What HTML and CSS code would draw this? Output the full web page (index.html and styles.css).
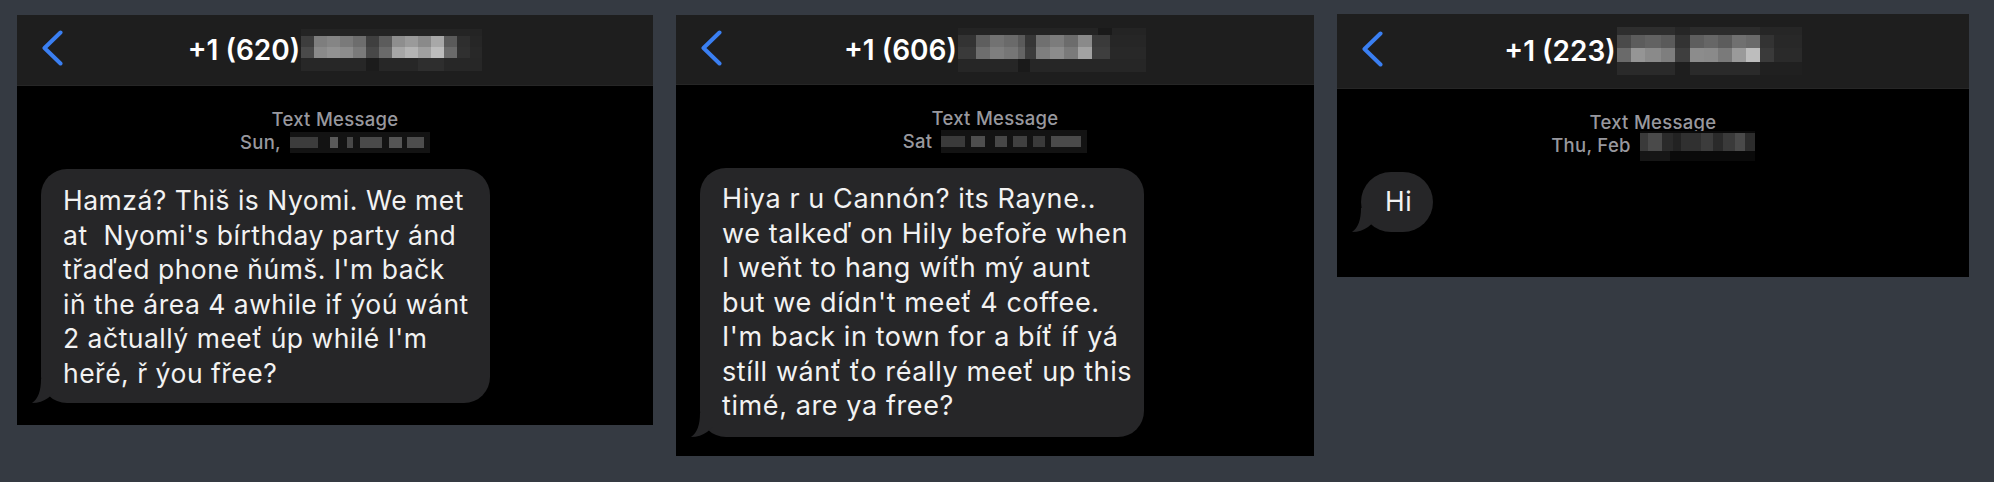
FILE: index.html
```html
<!DOCTYPE html>
<html lang="en">
<head>
<meta charset="utf-8">
<title>Messages</title>
<link rel="stylesheet" href="styles.css">
</head>
<body>
<main class="board">
  <section class="phone phone--one">
    <header class="nav">
      <svg class="back" viewBox="0 0 21 36" aria-hidden="true"><path d="M18.5 2.5 L2.5 18 L18.5 33.5"/></svg>
      <div class="title">
        <span class="num">+1 (620)</span>
        <svg class="mosaic" width="181" height="42" viewBox="0 0 181 42" aria-hidden="true">
          <rect x="0" y="0" width="181" height="7" fill="#242424"/>
          <rect x="0" y="7" width="13" height="11" fill="#3d3d3d"/><rect x="13" y="7" width="13" height="11" fill="#7e7e7e"/><rect x="26" y="7" width="13" height="11" fill="#858585"/><rect x="39" y="7" width="13" height="11" fill="#7a7a7a"/><rect x="52" y="7" width="13" height="11" fill="#6d6d6d"/><rect x="65" y="7" width="13" height="11" fill="#3f3f3f"/><rect x="78" y="7" width="13" height="11" fill="#5c5c5c"/><rect x="91" y="7" width="13" height="11" fill="#8e8e8e"/><rect x="104" y="7" width="13" height="11" fill="#9a9a9a"/><rect x="117" y="7" width="13" height="11" fill="#8a8a8a"/><rect x="130" y="7" width="13" height="11" fill="#a8a8a8"/><rect x="143" y="7" width="13" height="11" fill="#5a5a5a"/><rect x="156" y="7" width="13" height="11" fill="#2e2e2e"/><rect x="169" y="7" width="12" height="11" fill="#262626"/>
          <rect x="0" y="18" width="13" height="11" fill="#4a4a4a"/><rect x="13" y="18" width="13" height="11" fill="#8a8a8a"/><rect x="26" y="18" width="13" height="11" fill="#929292"/><rect x="39" y="18" width="13" height="11" fill="#8c8c8c"/><rect x="52" y="18" width="13" height="11" fill="#7a7a7a"/><rect x="65" y="18" width="13" height="11" fill="#484848"/><rect x="78" y="18" width="13" height="11" fill="#6a6a6a"/><rect x="91" y="18" width="13" height="11" fill="#a6a6a6"/><rect x="104" y="18" width="13" height="11" fill="#b4b4b4"/><rect x="117" y="18" width="13" height="11" fill="#a0a0a0"/><rect x="130" y="18" width="13" height="11" fill="#bcbcbc"/><rect x="143" y="18" width="13" height="11" fill="#6a6a6a"/><rect x="156" y="18" width="13" height="11" fill="#303030"/><rect x="169" y="18" width="12" height="11" fill="#282828"/>
          <rect x="0" y="29" width="181" height="13" fill="#272727"/><rect x="65" y="29" width="13" height="13" fill="#1c1c1c"/><rect x="117" y="29" width="26" height="13" fill="#2e2e2e"/>
        </svg>
      </div>
      <span class="nav-spacer"></span>
    </header>
    <div class="thread">
      <div class="meta">
        <div>Text Message</div>
        <div class="meta-date">Sun,
          <svg class="mosaic-sm" width="140" height="21" viewBox="0 0 140 21" aria-hidden="true">
            <rect x="0" y="0" width="140" height="21" fill="#131313"/>
            <rect x="0" y="5" width="28" height="11" fill="#3c3c3c"/><rect x="40" y="5" width="8" height="11" fill="#5a5a5a"/><rect x="57" y="5" width="6" height="11" fill="#484848"/><rect x="70" y="5" width="22" height="11" fill="#4a4a4a"/><rect x="99" y="5" width="13" height="11" fill="#555555"/><rect x="117" y="5" width="17" height="11" fill="#4d4d4d"/>
          </svg>
        </div>
      </div>
      <div class="bubble bubble--one">Hamzá? Thiš is Nyomi. We met<br>at&nbsp; Nyomi's bírthday party ánd<br>třaďed phone ňúmš. I'm bačk<br>iň the área 4 awhile if ýoú wánt<br>2 ačtuallý meeť úp whilé I'm<br>heřé, ř ýou fřee?<svg class="tail" viewBox="0 0 24 24" aria-hidden="true"><path d="M9 0 C9 12 6 20 0 24 C6 24 12 22 16 19 L22 14 L22 0 Z"/></svg></div>
    </div>
  </section>

  <section class="phone phone--two">
    <header class="nav">
      <svg class="back" viewBox="0 0 21 36" aria-hidden="true"><path d="M18.5 2.5 L2.5 18 L18.5 33.5"/></svg>
      <div class="title">
        <span class="num">+1 (606)</span>
        <svg class="mosaic" width="188" height="44" viewBox="0 0 188 44" aria-hidden="true">
          <rect x="0" y="0" width="188" height="7" fill="#242424"/><rect x="140" y="0" width="14" height="7" fill="#1a1a1a"/>
          <rect x="0" y="7" width="18" height="12" fill="#333333"/><rect x="18" y="7" width="14" height="12" fill="#5e5e5e"/><rect x="32" y="7" width="14" height="12" fill="#727272"/><rect x="46" y="7" width="14" height="12" fill="#6a6a6a"/><rect x="60" y="7" width="7" height="12" fill="#5a5a5a"/><rect x="67" y="7" width="11" height="12" fill="#363636"/><rect x="78" y="7" width="14" height="12" fill="#707070"/><rect x="92" y="7" width="14" height="12" fill="#7c7c7c"/><rect x="106" y="7" width="14" height="12" fill="#6c6c6c"/><rect x="120" y="7" width="14" height="12" fill="#8a8a8a"/><rect x="134" y="7" width="18" height="12" fill="#3a3a3a"/><rect x="152" y="7" width="36" height="12" fill="#262626"/>
          <rect x="0" y="19" width="18" height="12" fill="#3a3a3a"/><rect x="18" y="19" width="14" height="12" fill="#6e6e6e"/><rect x="32" y="19" width="14" height="12" fill="#7e7e7e"/><rect x="46" y="19" width="14" height="12" fill="#767676"/><rect x="60" y="19" width="7" height="12" fill="#646464"/><rect x="67" y="19" width="11" height="12" fill="#3c3c3c"/><rect x="78" y="19" width="14" height="12" fill="#7e7e7e"/><rect x="92" y="19" width="14" height="12" fill="#8c8c8c"/><rect x="106" y="19" width="14" height="12" fill="#7a7a7a"/><rect x="120" y="19" width="14" height="12" fill="#a2a2a2"/><rect x="134" y="19" width="18" height="12" fill="#3e3e3e"/><rect x="152" y="19" width="36" height="12" fill="#282828"/>
          <rect x="0" y="31" width="188" height="13" fill="#262626"/><rect x="60" y="31" width="12" height="13" fill="#1a1a1a"/>
        </svg>
      </div>
      <span class="nav-spacer"></span>
    </header>
    <div class="thread">
      <div class="meta">
        <div>Text Message</div>
        <div class="meta-date">Sat
          <svg class="mosaic-sm" width="146" height="23" viewBox="0 0 146 23" aria-hidden="true">
            <rect x="0" y="0" width="146" height="23" fill="#131313"/>
            <rect x="0" y="6" width="24" height="11" fill="#3a3a3a"/><rect x="30" y="6" width="14" height="11" fill="#4e4e4e"/><rect x="54" y="6" width="12" height="11" fill="#474747"/><rect x="72" y="6" width="14" height="11" fill="#404040"/><rect x="92" y="6" width="12" height="11" fill="#3a3a3a"/><rect x="110" y="6" width="30" height="11" fill="#4a4a4a"/>
          </svg>
        </div>
      </div>
      <div class="bubble bubble--two">Hiya r u Cannón? its Rayne..<br>we talkeď on Hily befoře when<br>I weňt to hang wíťh mý aunt<br>but we dídn't meeť 4 coffee.<br>I'm back in town for a bíť íf yá<br>stíll wánť ťo réally meeť up this<br>timé, are ya free?<svg class="tail" viewBox="0 0 24 24" aria-hidden="true"><path d="M9 0 C9 12 6 20 0 24 C6 24 12 22 16 19 L22 14 L22 0 Z"/></svg></div>
    </div>
  </section>

  <section class="phone phone--three">
    <header class="nav">
      <svg class="back" viewBox="0 0 21 36" aria-hidden="true"><path d="M18.5 2.5 L2.5 18 L18.5 33.5"/></svg>
      <div class="title">
        <span class="num">+1 (223)</span>
        <svg class="mosaic" width="185" height="48" viewBox="0 0 185 48" aria-hidden="true">
          <rect x="0" y="0" width="185" height="8" fill="#262626"/><rect x="0" y="0" width="58" height="8" fill="#2e2e2e"/><rect x="73" y="0" width="70" height="8" fill="#2c2c2c"/>
          <rect x="0" y="8" width="14" height="13" fill="#4a4a4a"/><rect x="14" y="8" width="14" height="13" fill="#5c5c5c"/><rect x="28" y="8" width="16" height="13" fill="#626262"/><rect x="44" y="8" width="14" height="13" fill="#5a5a5a"/><rect x="58" y="8" width="15" height="13" fill="#333333"/><rect x="73" y="8" width="14" height="13" fill="#5e5e5e"/><rect x="87" y="8" width="14" height="13" fill="#666666"/><rect x="101" y="8" width="14" height="13" fill="#5c5c5c"/><rect x="115" y="8" width="14" height="13" fill="#707070"/><rect x="129" y="8" width="14" height="13" fill="#6a6a6a"/><rect x="143" y="8" width="14" height="13" fill="#333333"/><rect x="157" y="8" width="28" height="13" fill="#282828"/>
          <rect x="0" y="21" width="14" height="14" fill="#6a6a6a"/><rect x="14" y="21" width="14" height="14" fill="#959595"/><rect x="28" y="21" width="16" height="14" fill="#8a8a8a"/><rect x="44" y="21" width="14" height="14" fill="#7e7e7e"/><rect x="58" y="21" width="15" height="14" fill="#3e3e3e"/><rect x="73" y="21" width="14" height="14" fill="#8c8c8c"/><rect x="87" y="21" width="14" height="14" fill="#8a8a8a"/><rect x="101" y="21" width="14" height="14" fill="#7a7a7a"/><rect x="115" y="21" width="14" height="14" fill="#9a9a9a"/><rect x="129" y="21" width="14" height="14" fill="#bdbdbd"/><rect x="143" y="21" width="14" height="14" fill="#3a3a3a"/><rect x="157" y="21" width="28" height="14" fill="#2a2a2a"/>
          <rect x="0" y="35" width="185" height="13" fill="#2a2a2a"/><rect x="58" y="35" width="15" height="13" fill="#1e1e1e"/><rect x="143" y="35" width="42" height="13" fill="#202020"/>
        </svg>
      </div>
      <span class="nav-spacer"></span>
    </header>
    <div class="thread">
      <div class="meta">
        <div>Text Message</div>
        <div class="meta-date">Thu, Feb
          <svg class="mosaic-sm" width="115" height="30" viewBox="0 0 115 30" aria-hidden="true">
            <rect x="0" y="0" width="115" height="30" fill="#0a0a0a"/>
            <rect x="0" y="2" width="8" height="18" fill="#3a3a3a"/><rect x="8" y="2" width="14" height="18" fill="#4a4a4a"/><rect x="22" y="2" width="11" height="18" fill="#2a2a2a"/><rect x="33" y="2" width="8" height="18" fill="#222222"/><rect x="41" y="2" width="20" height="18" fill="#303030"/><rect x="61" y="2" width="12" height="18" fill="#3c3c3c"/><rect x="73" y="2" width="10" height="18" fill="#2a2a2a"/><rect x="83" y="2" width="12" height="18" fill="#3a3a3a"/><rect x="95" y="2" width="10" height="18" fill="#4a4a4a"/><rect x="105" y="2" width="10" height="18" fill="#2c2c2c"/>
            <rect x="0" y="20" width="30" height="10" fill="#161616"/>
          </svg>
        </div>
      </div>
      <div class="bubble bubble--three">Hi<svg class="tail" viewBox="0 0 24 24" aria-hidden="true"><path d="M9 0 C9 12 6 20 0 24 C6 24 12 22 16 19 L22 14 L22 0 Z"/></svg></div>
    </div>
  </section>
</main>
</body>
</html>
```

FILE: styles.css
```css
* {
  box-sizing: border-box;
}

html,
body {
  margin: 0;
  padding: 0;
}

body {
  width: 1994px;
  height: 482px;
  overflow: hidden;
  background: #353a42;
  font-family: Inter, "Noto Sans", "Liberation Sans", sans-serif;
}

.board {
  display: flex;
  align-items: flex-start;
  gap: 23px;
  padding: 15px 0 0 17px;
}

.phone {
  display: flex;
  flex-direction: column;
  background: #000;
}

.phone--one {
  width: 636px;
  padding-bottom: 22px;
}

.phone--two {
  width: 638px;
  padding-bottom: 19px;
}

.phone--three {
  width: 632px;
  margin-top: -1px;
  padding-bottom: 45px;
}

.nav {
  display: grid;
  grid-template-columns: 1fr auto 1fr;
  align-items: center;
  height: 71px;
  padding: 0 25px;
  background: #1e1e1e;
  border-bottom: 1px solid #262626;
}

.phone--two .nav {
  height: 70px;
}

.phone--three .nav {
  height: 75px;
}

.back {
  display: block;
  width: 21px;
  height: 36px;
  margin-bottom: 4px;
  fill: none;
  stroke: #3a7ff2;
  stroke-width: 4;
  stroke-linecap: round;
  stroke-linejoin: round;
}

.title {
  display: flex;
  align-items: center;
  color: #fff;
  font-size: 28px;
  font-weight: 600;
  white-space: nowrap;
}

.mosaic {
  display: block;
  margin-left: 1px;
}

.thread {
  display: flex;
  flex-direction: column;
  align-items: flex-start;
  padding: 0 24px;
}

.meta {
  align-self: stretch;
  padding-top: 22px;
  color: #98989e;
  font-size: 18.5px;
  font-weight: 500;
  letter-spacing: 0.3px;
  line-height: 23px;
  text-align: center;
}

.meta-date {
  display: flex;
  justify-content: center;
  align-items: center;
  gap: 9px;
  height: 23px;
}

.mosaic-sm {
  display: block;
  flex: none;
}

.bubble {
  position: relative;
  margin-top: 15px;
  padding: 14px 22px 13px;
  border-radius: 26px;
  background: #262628;
  color: #f2f2f2;
  font-size: 26.5px;
  letter-spacing: 0.5px;
  line-height: 34.5px;
  white-space: nowrap;
}

.bubble--one {
  width: 449px;
}

.bubble--two {
  width: 444px;
  font-size: 27px;
  letter-spacing: 0.6px;
}

.bubble--three {
  width: 72px;
  height: 60px;
  padding: 12px 0 0 24px;
  border-radius: 30px;
}

.tail {
  position: absolute;
  left: -9px;
  bottom: 0;
  width: 24px;
  height: 24px;
  fill: #262628;
}
```
